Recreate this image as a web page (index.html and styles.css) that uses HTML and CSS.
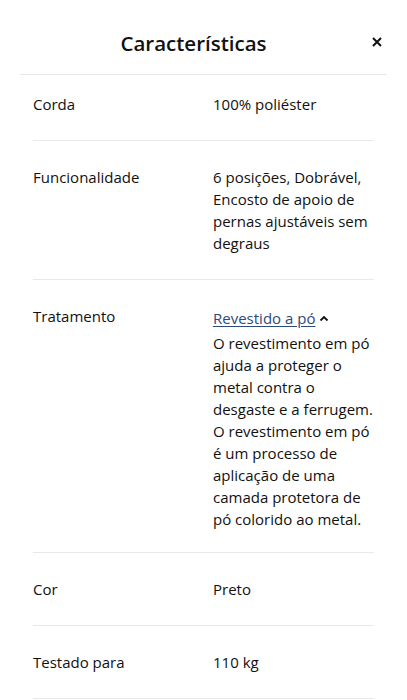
FILE: index.html
```html
<!DOCTYPE html>
<html>
<head>
	<title>Características</title>
	<link rel="stylesheet" href="styles.css">
</head>
<body>
	<div class="sheet">
		<div class="sheet-header">
			<h1 class="sheet-title">Características</h1>
			<button class="close-btn" aria-label="Fechar">
				<svg width="10" height="10" viewBox="0 0 10 10">
					<path d="M1 1 L9 9 M9 1 L1 9" stroke="#111" stroke-width="2" fill="none"/>
				</svg>
			</button>
		</div>

		<div class="spec-list">
			<div class="spec-row first">
				<div class="spec-label">Corda</div>
				<div class="spec-value">100% poliéster</div>
			</div>
			<div class="spec-row">
				<div class="spec-label">Funcionalidade</div>
				<div class="spec-value">6 posições, Dobrável, Encosto de apoio de pernas ajustáveis sem degraus</div>
			</div>
			<div class="spec-row expanded">
				<div class="spec-label">Tratamento</div>
				<div class="spec-value">
					<div class="toggle">
						<a href="#" class="toggle-link">Revestido a pó</a>
						<svg class="chevron" width="10" height="7" viewBox="0 0 10 7">
							<path d="M1.5 5.5 L5 2 L8.5 5.5" stroke="#111" stroke-width="1.8" fill="none"/>
						</svg>
					</div>
					<p class="toggle-text">O revestimento em pó ajuda a proteger o metal contra o desgaste e a ferrugem. O revestimento em pó é um processo de aplicação de uma camada protetora de pó colorido ao metal.</p>
				</div>
			</div>
			<div class="spec-row">
				<div class="spec-label">Cor</div>
				<div class="spec-value">Preto</div>
			</div>
			<div class="spec-row">
				<div class="spec-label">Testado para</div>
				<div class="spec-value">110 kg</div>
			</div>
		</div>
	</div>
</body>
</html>
```

FILE: styles.css
```css
body {
	margin: 0;
	padding: 0;
	background-color: #fff;
	font-family: "Open Sans", "Noto Sans", Arial, sans-serif;
	color: #111;
}

.sheet {
	width: 100%;
}

.sheet-header {
	display: flex;
	align-items: center;
	height: 74px;
	margin: 0 20px;
	border-bottom: 1px solid #e8e8e8;
}

.sheet-title {
	flex: 1;
	margin: 0;
	text-align: center;
	font-size: 20.5px;
	font-weight: 600;
	line-height: 28px;
	padding-top: 12px;
}

.close-btn {
	width: 20px;
	height: 20px;
	padding: 0;
	border: none;
	background: none;
	display: flex;
	align-items: center;
	justify-content: center;
	margin-top: 10px;
}

.spec-list {
	margin: 0 33px;
}

.spec-row {
	display: flex;
	padding: 25px 0;
	border-bottom: 1px solid #e8e8e8;
	font-size: 15px;
	line-height: 22px;
}

.spec-row.first {
	padding-top: 18px;
}

.spec-row.expanded {
	padding-bottom: 22px;
}

.spec-label {
	width: 180px;
	flex-shrink: 0;
}

.spec-value {
	flex: 1;
}

.toggle {
	display: flex;
	align-items: center;
	margin-top: 2px;
	margin-bottom: 3px;
}

.toggle-link {
	color: #2d4a7c;
	text-decoration: underline;
	text-underline-offset: 2px;
}

.chevron {
	margin-left: 4px;
}

.toggle-text {
	margin: 0;
}
```
